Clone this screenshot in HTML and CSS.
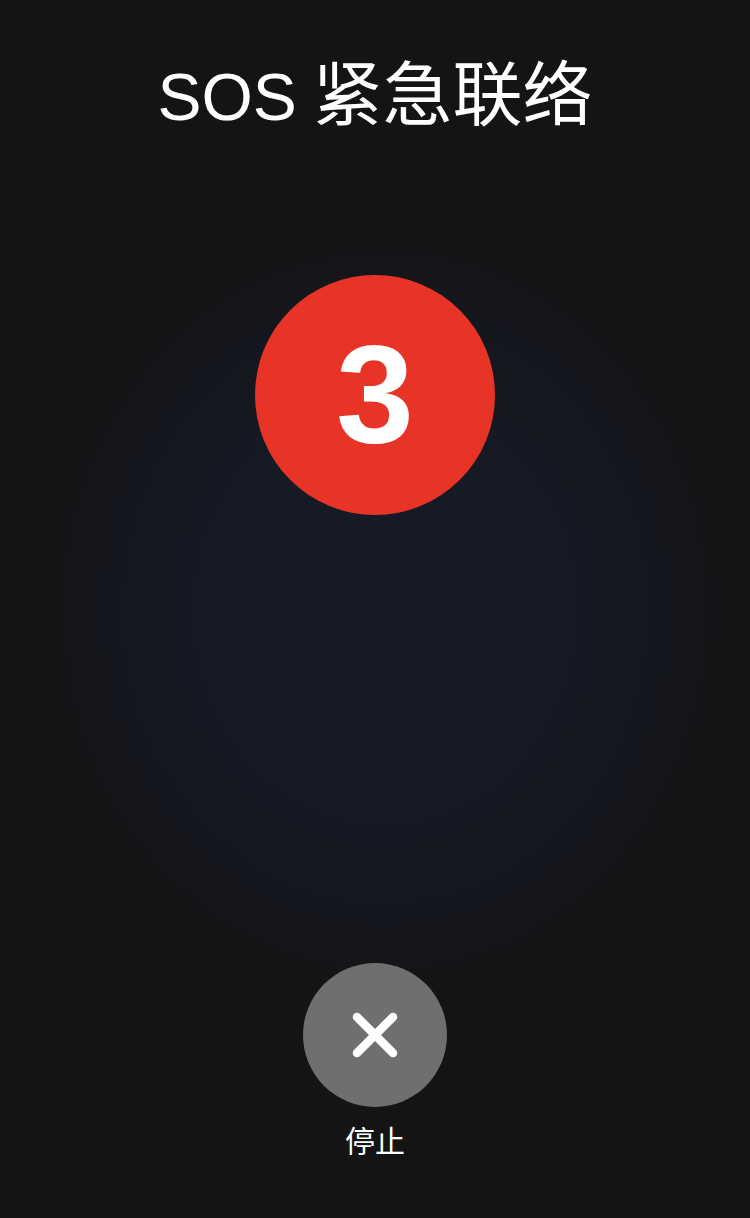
FILE: index.html
```html
<!DOCTYPE html>
<html lang="zh-CN">
<head>
<meta charset="utf-8">
<title>SOS 紧急联络</title>
<link rel="stylesheet" href="styles.css">
</head>
<body>
<main class="screen">
  <h1 class="title"><span class="latin">SOS</span> 紧急联络</h1>
  <div class="countdown"><span class="count">3</span></div>
  <div class="spacer"></div>
  <button class="stop-btn" aria-label="停止">
    <svg width="46" height="46" viewBox="0 0 46 46">
      <path d="M5 5 L41 41 M41 5 L5 41" stroke="#ffffff" stroke-width="8.5" stroke-linecap="round" fill="none"/>
    </svg>
  </button>
  <div class="stop-label">停止</div>
</main>
</body>
</html>
```

FILE: styles.css
```css
html, body {
  margin: 0;
  padding: 0;
  background: #141414;
}
.screen {
  width: 750px;
  height: 1218px;
  box-sizing: border-box;
  display: flex;
  flex-direction: column;
  align-items: center;
  background:
    radial-gradient(ellipse 350px 390px at 385px 610px, #161a27 0%, #161a25 45%, #15171f 75%, #141414 100%);
  font-family: "Noto Sans CJK SC", "Noto Sans", sans-serif;
  color: #ffffff;
}
.title {
  margin: 52px 0 0;
  height: 76px;
  font-size: 70px;
  font-weight: 400;
  line-height: 76px;
  letter-spacing: 0;
}
.latin {
  font-family: "Liberation Sans", sans-serif;
  font-size: 66px;
}
.countdown {
  margin-top: 147px;
  width: 240px;
  height: 240px;
  border-radius: 50%;
  background: #e83427;
  display: flex;
  align-items: center;
  justify-content: center;
}
.count {
  font-family: "Liberation Sans", "Noto Sans", sans-serif;
  font-weight: 700;
  font-size: 140px;
  line-height: 1;
  margin-top: -2px;
}
.spacer {
  flex: 1;
}
.stop-btn {
  width: 144px;
  height: 144px;
  border-radius: 50%;
  border: none;
  padding: 0;
  background: #6f6f6f;
  display: flex;
  align-items: center;
  justify-content: center;
}
.stop-label {
  margin-top: 12px;
  margin-bottom: 59px;
  font-size: 30px;
  line-height: 40px;
}
```
